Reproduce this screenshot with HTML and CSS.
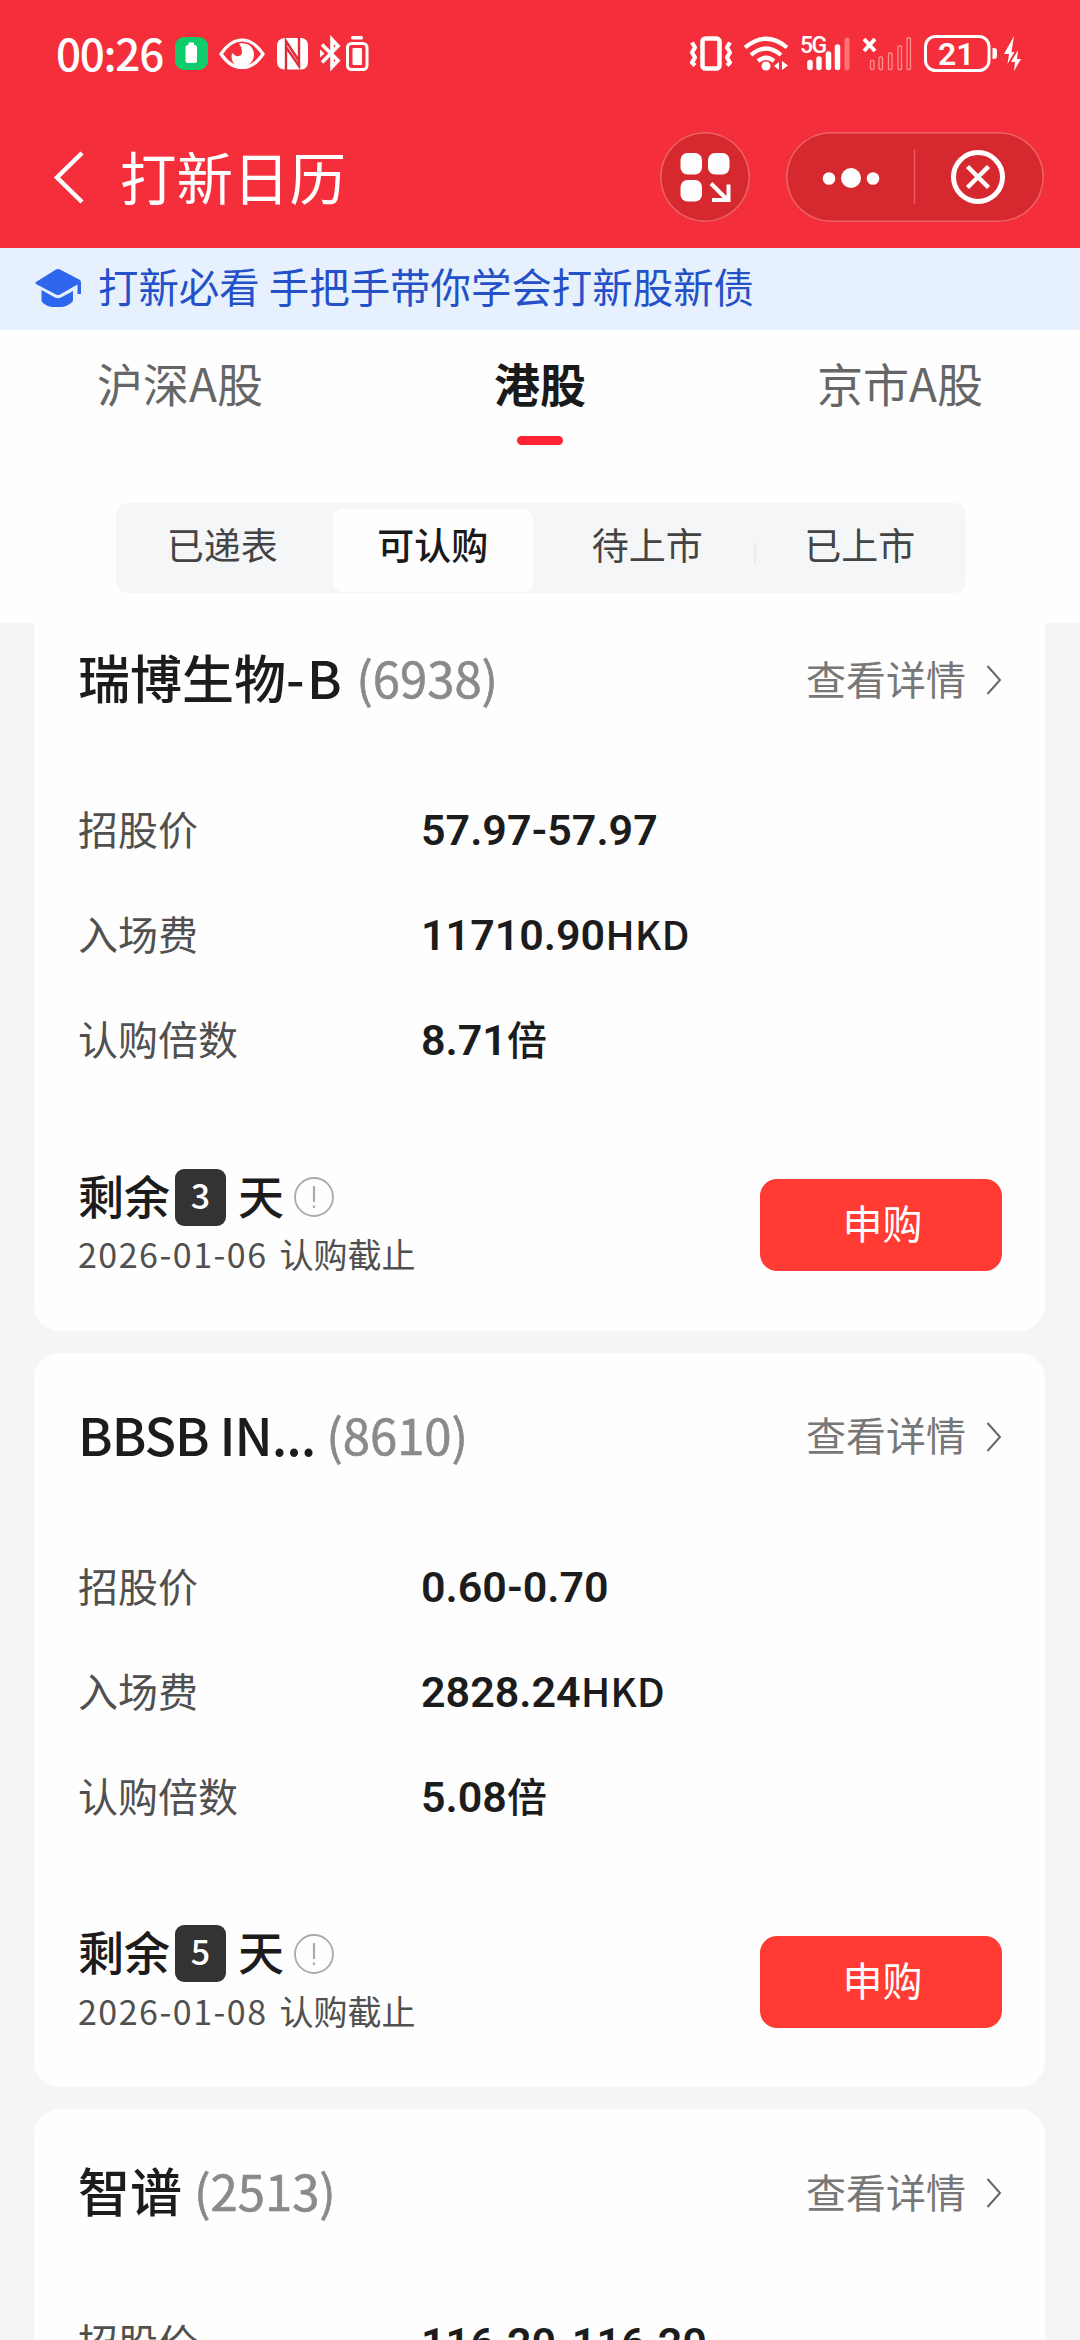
FILE: index.html
```html
<!DOCTYPE html>
<html lang="zh-CN">
<head>
<meta charset="utf-8">
<title>打新日历</title>
<link rel="stylesheet" href="styles.css">
</head>
<body>
<div class="app">
  <header class="header">
    <div class="status">
      <span class="time">00:26</span>
      <svg class="status-left" width="200" height="44" viewBox="172 32 200 44" fill="none">
        <rect x="175" y="37" width="33" height="33" rx="9" fill="#0ecb6b"/>
        <rect x="185.500" y="45" width="11.500" height="18" rx="2.500" fill="#fff"/><rect x="188.500" y="42.500" width="5.500" height="3" rx="1" fill="#fff"/>
        <path d="M221 54C227 45 234 40 242 40S257 45 263 54C257 63 250 67.500 242 67.500S227 63 221 54Z" stroke="#fff" stroke-width="3.200"/>
        <path d="M239 43.500C248 42 254 47 254 54.500 254 62 248 67 242 67 235 67 230 61 232 53L236 56Q242 57 242 51.500 242 47 239 43.500Z" fill="#fff"/>
        <path d="M284 38H302Q308 39 308 46V61Q308 69 302 69.500H284Q277 69 277 61V46Q277 39 284 38Z" fill="#fff"/>
        <path d="M286 70V41L299 61M299 37V66L286 47" stroke="#e02c38" stroke-width="2.400"/>
        <path d="M322 44.500 338 60.500 332 67V39.500L338 46 322 62.500" stroke="#fff" stroke-width="3.600"/>
        <path d="M320 49.500 324.500 53.500 320 57.500z" fill="#fff"/>
        <rect x="347.500" y="43.500" width="19.500" height="26" rx="4" stroke="#fff" stroke-width="3"/><rect x="352.500" y="48" width="9.500" height="17" rx="1" fill="#fff"/><rect x="351" y="36" width="12" height="3.500" rx="1.500" fill="#fff"/>
      </svg>
      <svg class="status-right" width="340" height="44" viewBox="686 32 340 44" fill="none">
        <rect x="702.500" y="38.500" width="17" height="30" rx="3" stroke="#fff" stroke-width="4.500"/>
        <path d="M692 42.500l3 5-3 5 3 5-3 5 3 3M730 42.500l-3 5 3 5-3 5 3 5-3 3" stroke="#fff" stroke-width="4.200" stroke-linejoin="round"/>
        <path d="M745 47.500Q766 30 787 47.500M751 55Q766 42 781 55M758 61Q766 54.500 774 61" stroke="#fff" stroke-width="4.200"/>
        <circle cx="766" cy="66" r="4.500" fill="#fff"/><path d="M779 62v8l-5-4zM782 61l6 4.500-6 4.500z" fill="#fff"/>
        <text class="net" x="800" y="53">5G</text>
        <path d="M810 62.500V67.500M819 59V67.500M828.500 54V67.500M837.500 47V67.500" stroke="#fff" stroke-width="5.500" stroke-linecap="round"/>
        <path d="M847 40V68" stroke="#ff7378" stroke-width="5" stroke-linecap="round"/>
        <path d="M864 39l11 12M875 39l-11 12" stroke="#fff" stroke-width="4"/>
        <g stroke="#ff8d8f" stroke-width="1.300"><rect x="870.500" y="60.500" width="3.500" height="9" rx="1"/><rect x="879" y="57" width="3.500" height="12.500" rx="1"/><rect x="888.500" y="53" width="3.500" height="16.500" rx="1"/><rect x="898" y="46" width="3.500" height="23.500" rx="1"/><rect x="907" y="38" width="3.500" height="31.500" rx="1"/></g>
        <rect x="925.500" y="36.500" width="63.500" height="34" rx="10" stroke="#fff" stroke-width="3"/>
        <path d="M992.500 48h1.500q3 0 3 3v5q0 3-3 3h-1.500z" fill="#fff"/>
        <text class="pct" x="938" y="65">21</text>
        <path d="M1014 36l-10 18h5l-1.500 10 7-12h-3zM1018 50l-7 12h4l-1 9 7-12h-4z" fill="#fff"/>
      </svg>
    </div>
    <div class="nav">
      <svg class="back" width="34" height="56" viewBox="0 0 34 56" fill="none" stroke="#fff" stroke-width="4.500"><path d="M30 4 5 28.500 30 53"/></svg>
      <h1 class="page-title">打新日历</h1>
      <div class="round-btn">
        <svg width="90" height="90" viewBox="660 132 90 90" fill="#fff"><rect x="680.500" y="153" width="21.500" height="21.500" rx="7"/><rect x="708" y="153" width="21.500" height="21.500" rx="7"/><rect x="680.500" y="180" width="21.500" height="21.500" rx="7"/><path d="M711 183.500 727 199.500M712 200h16.500v-15.500" fill="none" stroke="#fff" stroke-width="4"/></svg>
      </div>
      <div class="capsule">
        <svg width="258" height="90" viewBox="786 132 258 90" fill="none"><g fill="#fff"><circle cx="829" cy="178.500" r="6.300"/><circle cx="851" cy="178" r="10"/><circle cx="873" cy="178.500" r="6.300"/></g><path d="M914.500 149V204" stroke="#ea575b" stroke-width="1.500"/><circle cx="978" cy="177" r="24.500" stroke="#fff" stroke-width="5"/><path d="M967.500 166.500l21 21M988.500 166.500l-21 21" stroke="#fff" stroke-width="4.500"/></svg>
      </div>
    </div>
  </header>

  <div class="notice">
    <svg width="48" height="40" viewBox="34 270 48 40" fill="#2f66ee"><path d="M56 271.500Q58 270.500 60 271.500L80 282Q81 283 81 285V296h-3.500V286.500L60 296.500Q58 297.500 56 296.500L36 286Q34.500 285 36 284Z"/><path d="M41.500 292 55 299.500Q58 301 61 299.500L73 293V302Q73 304 71 305 66 309 61 309H53Q48 309 43 305 41.500 304 41.500 302Z"/></svg>
    <span class="notice-text">打新必看 手把手带你学会打新股新债</span>
  </div>

  <nav class="tabs">
    <span class="tab">沪深A股</span>
    <span class="tab tab-on">港股</span>
    <span class="tab">京市A股</span>
  </nav>
  <div class="segment-wrap">
    <div class="segment">
      <span class="seg">已递表</span><span class="seg seg-on">可认购</span><span class="seg">待上市</span><span class="seg seg-split">已上市</span>
    </div>
  </div>

  <main class="list">
    <section class="card card-first">
      <div class="card-head"><h2 class="name">瑞博生物<span class="suffix">-B</span></h2><span class="code">(6938)</span><a class="more"><span class="more-text">查看详情</span><svg class="arrow" width="16" height="32" viewBox="0 0 16 32" fill="none" stroke="#666" stroke-width="2"><path d="M1.500 2 14 16 1.500 30"/></svg></a></div>
      <dl class="facts">
        <dt>招股价</dt><dd><span class="num">57.97-57.97</span></dd>
        <dt>入场费</dt><dd><span class="num">11710.90</span>HKD</dd>
        <dt>认购倍数</dt><dd><span class="num">8.71</span>倍</dd>
      </dl>
      <div class="card-foot">
        <div class="deadline">
          <div class="remain">剩余<span class="days">3</span>天<svg class="info" width="42" height="42" viewBox="0 0 42 42" fill="none" stroke="#aaa"><circle cx="21" cy="21" r="19" stroke-width="1.800"/><path d="M21 10V26M21 29.500V32" stroke-width="2.200"/></svg></div>
          <div class="until"><span class="date">2026-01-06</span>认购截止</div>
        </div>
        <button class="buy">申购</button>
      </div>
    </section>

    <section class="card">
      <div class="card-head"><h2 class="name name-latin">BBSB IN...</h2><span class="code">(8610)</span><a class="more"><span class="more-text">查看详情</span><svg class="arrow" width="16" height="32" viewBox="0 0 16 32" fill="none" stroke="#666" stroke-width="2"><path d="M1.500 2 14 16 1.500 30"/></svg></a></div>
      <dl class="facts">
        <dt>招股价</dt><dd><span class="num">0.60-0.70</span></dd>
        <dt>入场费</dt><dd><span class="num">2828.24</span>HKD</dd>
        <dt>认购倍数</dt><dd><span class="num">5.08</span>倍</dd>
      </dl>
      <div class="card-foot">
        <div class="deadline">
          <div class="remain">剩余<span class="days">5</span>天<svg class="info" width="42" height="42" viewBox="0 0 42 42" fill="none" stroke="#aaa"><circle cx="21" cy="21" r="19" stroke-width="1.800"/><path d="M21 10V26M21 29.500V32" stroke-width="2.200"/></svg></div>
          <div class="until"><span class="date">2026-01-08</span>认购截止</div>
        </div>
        <button class="buy">申购</button>
      </div>
    </section>

    <section class="card">
      <div class="card-head"><h2 class="name">智谱</h2><span class="code">(2513)</span><a class="more"><span class="more-text">查看详情</span><svg class="arrow" width="16" height="32" viewBox="0 0 16 32" fill="none" stroke="#666" stroke-width="2"><path d="M1.500 2 14 16 1.500 30"/></svg></a></div>
      <dl class="facts">
        <dt>招股价</dt><dd><span class="num">116.20-116.20</span></dd>
      </dl>
    </section>
  </main>
</div>
</body>
</html>
```

FILE: styles.css
```css
* { box-sizing: border-box; margin: 0; padding: 0; }
html, body { height: 2340px; overflow: hidden; }
body { background: #f3f5f7; font-family: "Noto Sans CJK SC", sans-serif; color: #1c1c1c; }
.app { width: 1080px; height: 2340px; display: flex; flex-direction: column; overflow: hidden; }

.header { height: 248px; background: #f42f3b; color: #fff; flex: none; }
.status { display: flex; height: 108px; padding: 0 54px 0 56px; align-items: center; }
.time { font-size: 44px; line-height: 60px; width: 116px; padding-bottom: 4px; white-space: nowrap; letter-spacing: -1.300px; font-weight: 500; }
.status-right { margin-left: auto; }
.net { font: 500 23px Roboto, sans-serif; fill: #fff; letter-spacing: -1.500px; }
.pct { font: 600 32px Roboto, sans-serif; fill: #fff; }
.nav { display: flex; align-items: center; height: 138px; padding: 0 36px 0 52px; }
.page-title { font-size: 56.500px; font-weight: 400; line-height: 80px; margin-left: 34px; padding-bottom: 5px; }
.round-btn, .capsule { height: 90px; border-radius: 45px; background: #d5292f; box-shadow: inset 0 0 0 1.500px #ef6266; }
.round-btn { width: 90px; margin-left: auto; }
.capsule { width: 258px; margin-left: 36px; }

.notice { flex: none; height: 82px; display: flex; align-items: center; gap: 16px; padding: 0 34px 2px; background: #e7f0fd; color: #2450c8; }
.notice-text { font-size: 40.450px; line-height: 60px; padding-bottom: 4px; }

.tabs { flex: none; height: 173px; display: grid; grid-template-columns: repeat(3, 1fr); background: #fefefe; text-align: center; }
.tab { font-size: 46px; line-height: 68px; padding-top: 18px; color: #666; }
.tab-on { color: #1a1a1a; font-weight: 700; display: flex; flex-direction: column; align-items: center; }
.tab-on::after { content: ""; width: 46px; height: 9px; border-radius: 5px; background: #ff2434; margin-top: 20px; }

.segment-wrap { flex: none; height: 120px; background: #fefefe; padding: 0 114px 0 116px; }
.segment { height: 90px; display: grid; grid-template-columns: repeat(4, 1fr); background: #f5f6f8; border-radius: 12px; padding: 6px 0 1px; }
.seg { font-size: 37px; line-height: 71px; text-align: center; color: #444; border-radius: 10px; }
.seg-on { background: #fefefe; color: #1a1a1a; font-weight: 500; margin: 0 8px 0 4px; }
.seg-split { background: linear-gradient(#e6e8ea, #e6e8ea) 0 34px / 1.500px 20px no-repeat; }

.list { flex: 1; min-height: 0; overflow: hidden; padding: 0 35px 0 34px; display: flex; flex-direction: column; gap: 22px; }
.card { flex: none; height: 734.500px; background: #fefefe; border-radius: 26px; padding: 50px 43px 0 44px; }
.card-first { margin-top: -27px; }
.card-head { display: flex; align-items: center; height: 68px; white-space: nowrap; }
.name { font-size: 52px; font-weight: 500; line-height: 68px; padding-bottom: 6px; }
.name-latin { letter-spacing: -1px; }
.suffix { letter-spacing: 2.500px; }
.code { font-size: 49px; line-height: 68px; padding-bottom: 6px; color: #8a8a8a; margin-left: 12px; -webkit-text-stroke: 0.600px #8a8a8a; }
.name-latin + .code { margin-left: 11px; }
.more { margin-left: auto; display: flex; align-items: center; font-size: 40px; line-height: 60px; color: #777; }
.more-text { padding-bottom: 5px; }
.arrow { margin-left: 20px; }
.facts { display: grid; grid-template-columns: 343px 1fr; grid-auto-rows: 105px; margin-top: 62px; font-size: 40px; line-height: 105px; white-space: nowrap; }
dt { color: #505050; }
dd { font-weight: 500; }
.num { font-family: Roboto, sans-serif; font-size: 43px; font-weight: 600; }
.card-foot { display: flex; justify-content: space-between; align-items: flex-start; margin-top: 75px; }
.remain { display: flex; align-items: center; height: 60px; font-size: 46px; line-height: 54px; font-weight: 500; padding-bottom: 5px; }
.days { width: 51px; height: 57px; margin: 7px 12px 0 5px; border-radius: 9px; background: #333; color: #fff; font-size: 34px; line-height: 51px; text-align: center; }
.info { margin: 7px 0 0 9px; }
.until { font-size: 34px; line-height: 50px; margin-top: 3px; color: #505050; display: flex; gap: 12px; }
.date { letter-spacing: 1.500px; }
.buy { width: 242px; height: 92px; margin-top: 13px; border: 0; border-radius: 17px; background: #ff3b33; color: #fff; font: 400 40px/60px "Noto Sans CJK SC", sans-serif; padding: 0 0 6px 3px; }
```
